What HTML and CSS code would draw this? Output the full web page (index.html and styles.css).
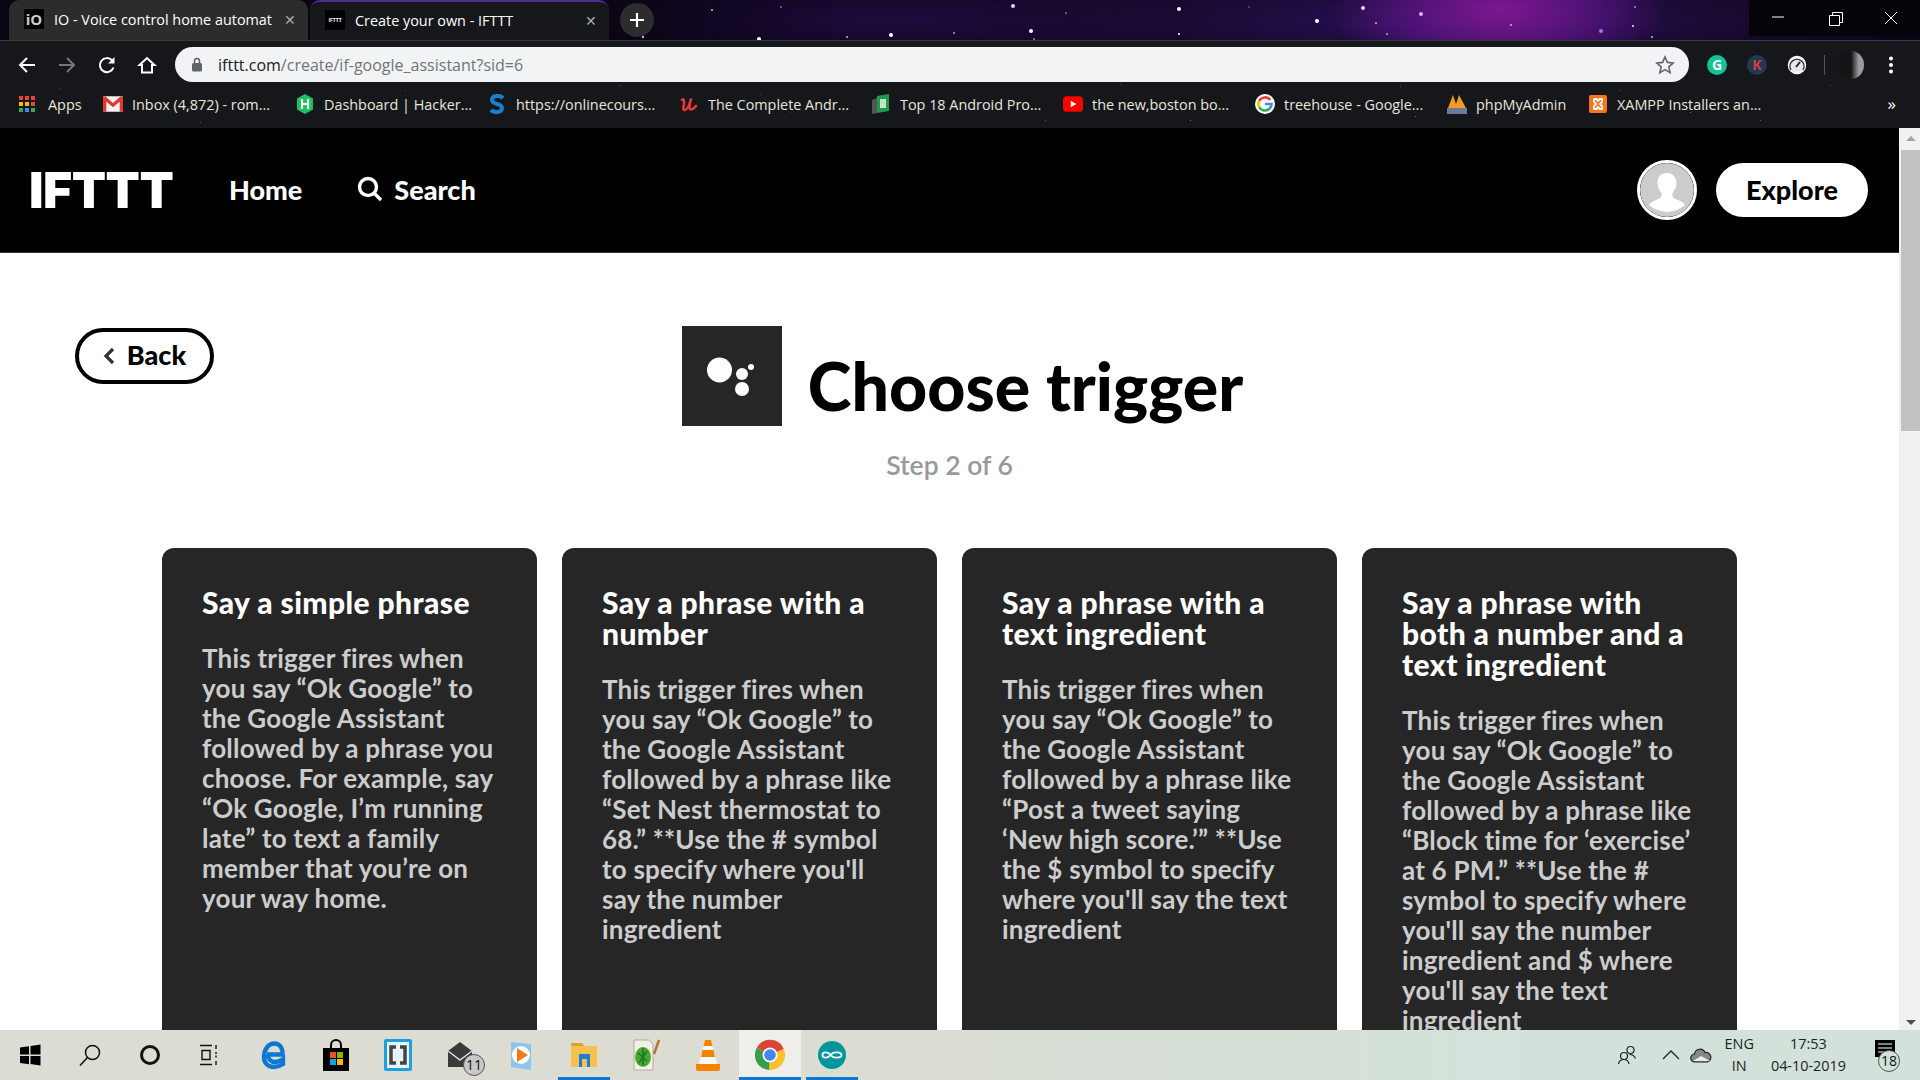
FILE: index.html
```html
<!DOCTYPE html>
<html lang="en">
<head>
    <meta charset="UTF-8">
    <title>Create your own - IFTTT</title>
    <link rel="stylesheet" href="styles.css">
</head>
<body>
    <div class="chrome">
        <div class="tabstrip">
            <div class="stars"></div>
            <div class="tab tab-idle">
                <span class="fav fav-io">iO</span>
                <span class="tab-title">IO - Voice control home automat</span>
                <span class="tab-x">✕</span>
            </div>
            <div class="tab tab-active">
                <span class="fav fav-ifttt">IFTTT</span>
                <span class="tab-title">Create your own - IFTTT</span>
                <span class="tab-x">✕</span>
            </div>
            <div class="newtab">
                <svg width="16" height="16" viewBox="0 0 16 16"><path d="M8 1v14M1 8h14" stroke="#fff" stroke-width="2.2"/></svg>
            </div>
            <div class="winctl">
                <svg width="46" height="36" viewBox="0 0 46 36"><path d="M17 17h12" stroke="#fff" stroke-width="1"/></svg>
                <svg width="46" height="36" viewBox="0 0 46 36"><path d="M17.500 15.500h10v10h-10zM20.500 15.500v-3h10v10h-3" fill="none" stroke="#fff" stroke-width="1"/></svg>
                <svg width="46" height="36" viewBox="0 0 46 36"><path d="M17 12l12 12M29 12l-12 12" stroke="#fff" stroke-width="1"/></svg>
            </div>
        </div>
        <div class="toolbar">
            <div class="nav-icons">
                <svg width="20" height="20" viewBox="0 0 20 20"><path d="M18 10H3M10 3l-7 7 7 7" fill="none" stroke="#fff" stroke-width="2"/></svg>
                <svg width="20" height="20" viewBox="0 0 20 20"><path d="M2 10h15M10 3l7 7-7 7" fill="none" stroke="#75777a" stroke-width="2"/></svg>
                <svg width="20" height="20" viewBox="0 0 20 20"><path d="M16.500 12.500A7 7 0 1 1 15 5.300" fill="none" stroke="#fff" stroke-width="2"/><path d="M17.500 2v6.500H11z" fill="#fff"/></svg>
                <svg width="20" height="20" viewBox="0 0 20 20"><path d="M2.500 10L10 3l7.500 7H15v7.500H5V10z" fill="none" stroke="#fff" stroke-width="2"/></svg>
            </div>
            <div class="urlbar">
                <svg width="12" height="15" viewBox="0 0 12 15"><rect x="1" y="6" width="10" height="8.500" rx="1.500" fill="#5f6368"/><path d="M3.500 6V4a2.500 2.500 0 0 1 5 0v2" fill="none" stroke="#5f6368" stroke-width="1.500"/></svg>
                <span class="url"><b>ifttt.com</b>/create/if-google_assistant?sid=6</span>
                <svg class="star" width="20" height="20" viewBox="0 0 20 20"><path d="M10 2l2.400 5.400 5.800.6-4.400 3.900 1.300 5.700L10 14.600l-5.100 3 1.300-5.700L1.800 8l5.800-.6z" fill="none" stroke="#5f6368" stroke-width="1.600"/></svg>
            </div>
            <div class="ext-icons">
                <span class="ext ext-g">G</span>
                <span class="ext ext-k">K</span>
                <svg width="20" height="20" viewBox="0 0 20 20"><circle cx="10" cy="10" r="8.500" fill="#e8e8e8" stroke="#fff" stroke-width="1.500"/><path d="M4 15a7 7 0 1 1 12 0" fill="none" stroke="#222" stroke-width="1.300"/><path d="M9 12l4-5" stroke="#222" stroke-width="2"/></svg>
                <span class="ext-sep"></span>
                <span class="profile"></span>
                <svg class="dots" width="6" height="20" viewBox="0 0 6 20"><circle cx="3" cy="3.500" r="2" fill="#fff"/><circle cx="3" cy="10" r="2" fill="#fff"/><circle cx="3" cy="16.500" r="2" fill="#fff"/></svg>
            </div>
        </div>
        <div class="bookmarks">
            <div class="stars stars-dim"></div>
            <a class="bm bm-apps">
                <svg viewBox="0 0 16 16"><g fill="#ea4335"><rect width="4" height="4"/><rect x="6" width="4" height="4"/><rect x="12" width="4" height="4"/></g><g fill="#fbbc05"><rect y="6" width="4" height="4"/><rect x="6" y="6" width="4" height="4"/><rect x="12" y="6" width="4" height="4" fill="#ea4335"/></g><g fill="#34a853"><rect y="12" width="4" height="4"/><rect x="6" y="12" width="4" height="4" fill="#4285f4"/><rect x="12" y="12" width="4" height="4"/></g></svg>
                Apps
            </a>
            <a class="bm">
                <svg viewBox="0 0 18 16"><rect y="1" width="18" height="14" rx="1" fill="#f4f4f4"/><path d="M0 2v13h3V6l6 5 6-5v9h3V2l-2-1-7 6-7-6z" fill="#e0392e"/></svg>
                Inbox (4,872) - rom...
            </a>
            <a class="bm">
                <svg viewBox="0 0 18 20"><path d="M9 0l8 4.500v11L9 20l-8-4.500v-11z" fill="#1bc15a"/><path d="M6 5v10M12 5v10M6 10h6" stroke="#fff" stroke-width="2.200"/></svg>
                Dashboard | Hacker...
            </a>
            <a class="bm">
                <svg viewBox="0 0 18 20"><path d="M15 4C12 1 4 1 4 6c0 5 10 3 10 8 0 5-8 5-11 2" fill="none" stroke="#1a7fd1" stroke-width="4"/></svg>
                https://onlinecours...
            </a>
            <a class="bm">
                <svg viewBox="0 0 18 18"><path d="M2 6c3-4 3 2 2 6s3 3 5-2l2-6c-2 6-2 10 0 10s3-2 5-4" fill="none" stroke="#e8383d" stroke-width="2.200"/></svg>
                The Complete Andr...
            </a>
            <a class="bm">
                <svg viewBox="0 0 18 20"><path d="M0 6l5-2v15l-5 1z" fill="#555"/><path d="M5 2l12-2v17L5 19z" fill="#1f9a4e"/><path d="M8 5h6v9H8z" fill="#bfe6c8"/></svg>
                Top 18 Android Pro...
            </a>
            <a class="bm">
                <svg viewBox="0 0 18 14"><rect width="18" height="14" rx="3.500" fill="#f00"/><path d="M7 4l5 3-5 3z" fill="#fff"/></svg>
                the new,boston bo...
            </a>
            <a class="bm">
                <svg viewBox="0 0 20 20"><circle cx="10" cy="10" r="10" fill="#fff"/><path d="M15.200 6A6.500 6.500 0 0 0 4.200 7" fill="none" stroke="#ea4335" stroke-width="2.600"/><path d="M4.200 7a6.500 6.500 0 0 0 0 6" fill="none" stroke="#fbbc05" stroke-width="2.600"/><path d="M4.200 13a6.500 6.500 0 0 0 10.500 1.500" fill="none" stroke="#34a853" stroke-width="2.600"/><path d="M14.700 14.500c1.300-1.300 1.800-2.700 1.800-4.500H10" fill="none" stroke="#4285f4" stroke-width="2.600"/></svg>
                treehouse - Google...
            </a>
            <a class="bm bm-pma">
                <svg viewBox="0 0 20 20"><path d="M1 14L6 1l3 9 3-9 7 13z" fill="#f29b21"/><rect y="14" width="20" height="6" fill="#6c7a99"/></svg>
                phpMyAdmin
            </a>
            <a class="bm">
                <svg viewBox="0 0 18 20"><rect y="1" width="18" height="18" rx="2" fill="#f5761f"/><path d="M5 5h2.500L9 7l1.500-2H13v3l-2 2 2 2v3h-2.500L9 13l-1.500 2H5v-3l2-2-2-2z" fill="none" stroke="#fff" stroke-width="1.800"/></svg>
                XAMPP Installers an...
            </a>
            <span class="bm-more">»</span>
        </div>
    </div>

    <div class="viewport">
        <div class="page">
            <header class="topnav">
                <span class="logo">IFTTT</span>
                <a class="navlink">Home</a>
                <a class="navlink nav-search">
                    <svg width="26" height="26" viewBox="0 0 26 26"><circle cx="11" cy="11" r="8.500" fill="none" stroke="#fff" stroke-width="3.400"/><path d="M17 17l7 7" stroke="#fff" stroke-width="3.400"/></svg>
                    Search
                </a>
                <span class="avatar">
                    <svg width="54" height="54" viewBox="0 0 54 54"><circle cx="27" cy="27" r="27" fill="#ccc"/><path d="M27 10c-7 0-10 5-9.500 11 .3 4 2 7 4 9 .5 3-.5 5-3 6-4 1.500-8 3-9.500 6a27 27 0 0 0 36 0c-1.500-3-5.500-4.500-9.500-6-2.500-1-3.500-3-3-6 2-2 3.700-5 4-9C36.500 15 34 10 27 10z" fill="#fff"/></svg>
                </span>
                <a class="explore">Explore</a>
            </header>

            <main class="content">
                <div class="title-row">
                    <a class="back">
                        <svg width="12" height="18" viewBox="0 0 12 18"><path d="M10 2L3 9l7 7" fill="none" stroke="#333" stroke-width="3.200"/></svg>
                        <span class="back-label">Back</span>
                    </a>
                    <div class="title-group">
                        <div class="service-icon">
                            <svg width="100" height="100" viewBox="0 0 100 100"><circle cx="37.500" cy="44" r="12.500" fill="#fff"/><circle cx="60" cy="48" r="6" fill="#fff"/><circle cx="69" cy="41" r="3" fill="#fff"/><circle cx="60" cy="63" r="7" fill="#fff"/></svg>
                        </div>
                        <h1>Choose trigger</h1>
                    </div>
                </div>
                <p class="step">Step 2 of 6</p>

                <section class="cards">
                    <article class="card">
                        <h2>Say a simple phrase</h2>
                        <p>This trigger fires when<br>you say “Ok Google” to<br>the Google Assistant<br>followed by a phrase you<br>choose. For example, say<br>“Ok Google, I’m running<br>late” to text a family<br>member that you’re on<br>your way home.</p>
                    </article>
                    <article class="card">
                        <h2>Say a phrase with a<br>number</h2>
                        <p>This trigger fires when<br>you say “Ok Google” to<br>the Google Assistant<br>followed by a phrase like<br>“Set Nest thermostat to<br>68.” **Use the # symbol<br>to specify where you'll<br>say the number<br>ingredient</p>
                    </article>
                    <article class="card">
                        <h2>Say a phrase with a<br>text ingredient</h2>
                        <p>This trigger fires when<br>you say “Ok Google” to<br>the Google Assistant<br>followed by a phrase like<br>“Post a tweet saying<br>‘New high score.’” **Use<br>the $ symbol to specify<br>where you'll say the text<br>ingredient</p>
                    </article>
                    <article class="card">
                        <h2>Say a phrase with<br>both a number and a<br>text ingredient</h2>
                        <p>This trigger fires when<br>you say “Ok Google” to<br>the Google Assistant<br>followed by a phrase like<br>“Block time for ‘exercise’<br>at 6 PM.” **Use the #<br>symbol to specify where<br>you'll say the number<br>ingredient and $ where<br>you'll say the text<br>ingredient</p>
                    </article>
                </section>
            </main>
        </div>
        <div class="scrollbar">
            <span class="arrow-up"></span>
            <span class="thumb"></span>
            <span class="arrow-down"></span>
        </div>
    </div>

    <footer class="taskbar">
        <div class="task-icons">
            <span class="ti ti-sys"><svg width="24" height="24" viewBox="0 0 24 24"><path d="M2 4.500l9-1.300V11.500H2zM12.500 3l10-1.500v10h-10zM2 13h9v8.300l-9-1.300zM12.500 13h10v9.500l-10-1.500z" fill="#000"/></svg></span>
            <span class="ti ti-sys"><svg width="24" height="24" viewBox="0 0 24 24"><circle cx="14.500" cy="9.500" r="7" fill="none" stroke="#111" stroke-width="1.500"/><path d="M9.500 14.500L2 22.500" stroke="#111" stroke-width="1.500"/></svg></span>
            <span class="ti ti-sys"><svg width="24" height="24" viewBox="0 0 24 24"><circle cx="12" cy="12" r="8.500" fill="none" stroke="#111" stroke-width="3"/></svg></span>
            <span class="ti ti-sys"><svg width="24" height="24" viewBox="0 0 24 24"><path d="M2 2.500h12M2 21.500h12M4 7.500h8v9H4zM18 2v4M18 18v4" fill="none" stroke="#111" stroke-width="1.400"/><path d="M18 9v6" stroke="#111" stroke-width="1.400" stroke-dasharray="2 1.500"/></svg></span>
            <span class="ti"><svg width="26" height="30" viewBox="0 0 26 30"><path d="M6 14.500h15.500C22 8 18.500 3.500 13.500 3.500 7 3.500 3 10 3 17c0 6 4 10 10 10 3.500 0 6-1 9-3v-5c-3 2-5 3-8 3-4 0-7-3-7-7.500" fill="none" stroke="#0c78d6" stroke-width="4.400"/></svg></span>
            <span class="ti"><svg width="28" height="32" viewBox="0 0 28 32"><path d="M9 10V6a5 5 0 0 1 10 0v4" fill="none" stroke="#000" stroke-width="2"/><rect x="1" y="9" width="26" height="23" fill="#000"/><rect x="8" y="13" width="6" height="6" fill="#f25022"/><rect x="15" y="13" width="6" height="6" fill="#7fba00"/><rect x="8" y="20" width="6" height="6" fill="#00a4ef"/><rect x="15" y="20" width="6" height="6" fill="#ffb900"/></svg></span>
            <span class="ti"><svg width="30" height="34" viewBox="0 0 30 34"><rect x="1" y="1" width="28" height="32" rx="2" fill="#1c9ee0"/><rect x="4" y="4" width="22" height="26" fill="#e8f4fb"/><path d="M13 9H8v16h5M17 9h5v16h-5" fill="none" stroke="#444" stroke-width="3.500"/></svg></span>
            <span class="ti ti-mail"><svg width="26" height="28" viewBox="0 0 26 28"><path d="M13 1l12 9v16H1V10z" fill="#3a3a3a"/><path d="M1 10l12 9 12-9" fill="none" stroke="#ddd" stroke-width="1.500"/></svg><span class="badge">11</span></span>
            <span class="ti"><svg width="24" height="30" viewBox="0 0 24 30"><path d="M1 2l20 2v26L1 27z" fill="#8cc6ea"/><circle cx="11" cy="15" r="9" fill="#fff"/><path d="M7 8l11 7-11 7z" fill="#f07a1a"/></svg></span>
            <span class="ti ti-open"><svg width="28" height="28" viewBox="0 0 28 28"><path d="M1 2h11l3 3h12v21H1z" fill="#f3c14c"/><path d="M1 2h11l2 3H1z" fill="#dea32c"/><rect x="9" y="13" width="11" height="13" fill="#1a7fd1"/><rect x="12" y="18" width="5" height="8" fill="#f3c14c"/></svg></span>
            <span class="ti"><svg width="28" height="32" viewBox="0 0 28 32"><path d="M2 1h15l4 4v26H2z" fill="#f1f1ea" stroke="#aaa"/><ellipse cx="11" cy="18" rx="8" ry="10" fill="#4da628"/><path d="M6 14l9 8M7 24l8-12M11 9v17" stroke="#173" stroke-width="1.500"/><path d="M27 1l-5 14" stroke="#b07a2a" stroke-width="2.500"/></svg></span>
            <span class="ti"><svg width="26" height="32" viewBox="0 0 26 32"><path d="M10 1h6l6 24H4z" fill="#f7f7f7"/><path d="M10 1h6l1.500 6h-9zM7.500 11h11l1.500 7H6z" fill="#f58200"/><path d="M1 25h24v5a2 2 0 0 1-2 2H3a2 2 0 0 1-2-2z" fill="#f58200"/></svg></span>
            <span class="ti ti-open ti-chrome"><svg width="32" height="32" viewBox="0 0 32 32"><path d="M16 16L2.900 8.500A15 15 0 0 1 29.800 10z" fill="#db4437"/><path d="M16 16l13.800-6A15 15 0 0 1 15 31z" fill="#fbc02d"/><path d="M16 16l-1 15A15 15 0 0 1 2.900 8.500z" fill="#3b9c4a"/><circle cx="16" cy="16" r="7.500" fill="#fff"/><circle cx="16" cy="16" r="5.800" fill="#4285f4"/></svg></span>
            <span class="ti ti-open"><svg width="28" height="28" viewBox="0 0 28 28"><circle cx="14" cy="14" r="14" fill="#00979c"/><path d="M12.500 14c-3-4-8-3-8 0s5 4 8 0c3-4 11-3 11 0s-8 4-11 0z" fill="none" stroke="#fff" stroke-width="1.800"/></svg></span>
        </div>
        <div class="tray">
            <svg width="20" height="20" viewBox="0 0 20 20"><circle cx="7" cy="11" r="3.500" fill="none" stroke="#222" stroke-width="1.200"/><circle cx="13.500" cy="5" r="3.500" fill="none" stroke="#222" stroke-width="1.200"/><path d="M1.500 19c.5-3 2.500-4.500 5.500-4.500s4.500 1.500 5 4.500M12.500 9.500c3 0 5 1.500 6 4" fill="none" stroke="#222" stroke-width="1.200"/></svg>
            <svg class="tray-up" width="18" height="10" viewBox="0 0 18 10"><path d="M1 9l8-8 8 8" fill="none" stroke="#222" stroke-width="1.300"/></svg>
            <svg class="tray-cloud" width="22" height="15" viewBox="0 0 22 15"><path d="M5 14a4 4 0 0 1-.5-8A5.500 5.500 0 0 1 15 4.500 4.800 4.800 0 0 1 17 14z" fill="#888" stroke="#222" stroke-width="1.200"/><path d="M3 13l8-5 9 5z" fill="#eee"/></svg>
            <div class="lang">ENG<br>IN</div>
            <div class="clock">17:53<br>04-10-2019</div>
            <div class="notif">
                <svg width="20" height="18" viewBox="0 0 20 18"><rect width="20" height="17" fill="#000"/><path d="M3 4h14M3 8h14M3 12h10" stroke="#fff" stroke-width="1.200"/></svg>
                <span class="badge">18</span>
            </div>
        </div>
    </footer>
</body>
</html>
```

FILE: styles.css
```css
* {
    box-sizing: border-box;
}

html, body {
    height: 100%;
}

body {
    margin: 0;
    width: 1920px;
    height: 1080px;
    display: flex;
    flex-direction: column;
    overflow: hidden;
    font-family: "Open Sans", sans-serif;
}

/* browser chrome */
.chrome {
    flex: none;
    height: 128px;
    background: #16171a;
}

.tabstrip {
    position: relative;
    height: 41px;
    display: flex;
    align-items: flex-end;
    padding-left: 9px;
    background:
        radial-gradient(ellipse 170px 70px at 1500px 10px, #7d1790 0%, rgba(90, 20, 130, .75) 55%, transparent 100%),
        radial-gradient(ellipse 500px 60px at 1450px 20px, #2a1058 0%, transparent 100%),
        radial-gradient(ellipse 300px 50px at 900px 20px, #1e0a3e 0%, transparent 100%),
        #0a0514;
    border-bottom: 1px solid #3a3540;
    overflow: hidden;
}

.stars {
    position: absolute;
    left: 0;
    top: 0;
    width: 2px;
    height: 2px;
    border-radius: 50%;
    background: transparent;
    box-shadow:
        711px 9px 0 0 #c9b8ff, 780px 6px 0 0 #7a6ea0, 758px 38px 0 1px #fff, 890px 34px 0 1px #fff,
        846px 36px 0 0 #d6a0ff, 1012px 5px 0 1px #e0d0ff, 953px 32px 0 0 #d080ff, 1033px 38px 0 0 #a070ff,
        1030px 30px 0 1px #fff, 1178px 33px 0 0 #fff, 1065px 12px 0 0 #7a6ea0, 1248px 6px 0 0 #5a4e90,
        1178px 8px 0 1px #fff, 1316px 20px 0 1px #fff, 1362px 7px 0 1px #e8d0ff, 1375px 22px 0 0 #ffa0d0,
        1386px 33px 0 0 #a0a0ff, 1420px 13px 0 1px #e0b0ff, 1510px 24px 0 0 #ffa0d0, 1632px 25px 0 0 #ffe0ff,
        1651px 36px 0 0 #a0c0ff, 1600px 30px 0 1px #a070ff, 1634px 6px 0 0 #8090ff, 642px 36px 0 0 #fff;
}

.stars-dim {
    width: 1px;
    height: 1px;
    box-shadow:
        60px 6px 0 #555, 200px 40px 0 #666, 405px 8px 0 #555, 620px 3px 0 #777, 760px 12px 0 #555,
        790px 30px 0 #444, 1045px 38px 0 #777, 1120px 2px 0 #555, 1190px 38px 0 #999, 1400px 4px 0 #666,
        1415px 34px 0 #6a88cc, 1620px 8px 0 #777, 1690px 30px 0 #888, 1760px 38px 0 #777, 1830px 3px 0 #666;
}

.tab {
    position: relative;
    width: 299px;
    height: 40px;
    display: flex;
    align-items: center;
    gap: 10px;
    padding: 0 12px 2px 15px;
    border-radius: 10px 10px 0 0;
    color: #fff;
    font-size: 14.4px;
}

.tab-idle {
    background: #2c2c2c;
}

.tab-active {
    margin-left: 2px;
    background: #16171a;
    border-top: 2px solid #4f2f8a;
}

.fav {
    flex: none;
    width: 20px;
    height: 20px;
    background: #000;
    color: #ccc;
    text-align: center;
    overflow: hidden;
}

.fav-io {
    font-size: 15px;
    font-weight: 700;
    line-height: 20px;
}

.fav-ifttt {
    font-size: 5px;
    font-weight: 700;
    line-height: 20px;
    color: #fff;
}

.tab-title {
    flex: 1;
    white-space: nowrap;
}

.tab-x {
    color: #aaa;
    font-size: 14px;
}

.newtab {
    position: relative;
    width: 34px;
    height: 34px;
    margin: 0 0 3px 11px;
    border-radius: 50%;
    background: #2c2c2c;
    display: flex;
    align-items: center;
    justify-content: center;
}

.winctl {
    position: absolute;
    right: 0;
    top: 0;
    width: 171px;
    height: 36px;
    padding: 0 6px;
    background: #05040a;
    display: flex;
    justify-content: space-between;
}

.toolbar {
    height: 41px;
    display: flex;
    align-items: center;
    padding-top: 6px;
}

.nav-icons {
    width: 175px;
    display: flex;
    gap: 20px;
    padding-left: 17px;
}

.urlbar {
    width: 1514px;
    height: 35px;
    border-radius: 18px;
    background: #f1f3f4;
    display: flex;
    align-items: center;
    padding: 0 14px 0 16px;
}

.url {
    flex: 1;
    margin-left: 15px;
    font-size: 16px;
    color: #70757a;
}

.url b {
    font-weight: 400;
    color: #202124;
}

.ext-icons {
    flex: 1;
    display: flex;
    align-items: center;
    gap: 20px;
    padding-left: 18px;
}

.ext {
    width: 20px;
    height: 20px;
    border-radius: 50%;
    text-align: center;
    font-size: 14px;
    font-weight: 700;
    line-height: 20px;
}

.ext-g {
    background: #15c39a;
    color: #fff;
}

.ext-k {
    background: #24384e;
    color: #d0403c;
}

.ext-sep {
    width: 1px;
    height: 20px;
    margin: 0 -7px 0 -3px;
    background: #555;
}

.profile {
    width: 26px;
    height: 28px;
    border-radius: 50%;
    background: linear-gradient(90deg, #141414 50%, #9a9aa2 80%);
}

.dots {
    margin-left: 4px;
}

.bookmarks {
    position: relative;
    height: 46px;
    display: flex;
    align-items: center;
    padding: 0 0 2px 19px;
    color: #e6e6dc;
    font-size: 14.4px;
}

.bm {
    position: relative;
    flex: none;
    width: 192px;
    display: flex;
    align-items: center;
    gap: 9px;
    white-space: nowrap;
}

.bm svg {
    flex: none;
    width: 20px;
    height: 20px;
}

.bm-apps {
    width: 84px;
    gap: 13px;
}

.bm-apps svg {
    width: 16px;
    height: 16px;
}

.bm-pma {
    width: 141px;
}

.bm-more {
    position: absolute;
    right: 24px;
    top: 10px;
    font-size: 17px;
    color: #fff;
}

/* page area */
.viewport {
    flex: 1;
    min-height: 0;
    display: flex;
}

.page {
    flex: 1;
    min-width: 0;
    overflow: hidden;
    background: #fff;
    color: #000;
    font-family: Lato, sans-serif;
}

.topnav {
    height: 125px;
    display: flex;
    align-items: center;
    padding: 0 31px 0 30px;
    background: #000;
    border-bottom: 1px solid #333;
    color: #fff;
}

.logo {
    width: 144px;
    margin-right: 56px;
    margin-left: -1px;
    font-family: Inter, sans-serif;
    font-size: 50px;
    font-weight: 900;
    letter-spacing: -.5px;
    line-height: 1;
}

.navlink {
    padding-bottom: 2px;
    font-size: 27px;
    font-weight: 900;
    margin-right: 55px;
}

.nav-search {
    display: flex;
    align-items: center;
    gap: 11px;
}

.avatar {
    margin-left: auto;
    width: 60px;
    height: 60px;
    border-radius: 50%;
    border: 3px solid #fff;
    overflow: hidden;
}

.explore {
    margin-left: 19px;
    width: 152px;
    height: 54px;
    border-radius: 27px;
    background: #fff;
    color: #000;
    font-size: 27px;
    font-weight: 900;
    line-height: 54px;
    text-align: center;
}

.content {
    padding-top: 73px;
}

.title-row {
    display: grid;
    grid-template-columns: 1fr auto 1fr;
    align-items: start;
}

.back {
    justify-self: start;
    margin: 2px 0 0 75px;
    width: 139px;
    height: 56px;
    border: 4px solid #000;
    border-radius: 28px;
    display: flex;
    align-items: center;
    justify-content: center;
    gap: 12px;
    font-size: 27px;
    font-weight: 900;
}

.back-label {
    padding-bottom: 4px;
}

.title-group {
    display: flex;
    align-items: center;
    gap: 26px;
    margin-left: 26px;
}

.service-icon {
    width: 100px;
    height: 100px;
    background: #262626;
}

h1 {
    margin: 0;
    padding-top: 20px;
    font-size: 66.2px;
    font-weight: 900;
    line-height: 1.2;
}

.step {
    margin: 24px 0 0;
    text-align: center;
    font-size: 26.5px;
    font-weight: 600;
    line-height: 30px;
    color: #999;
}

.cards {
    margin: 68px 0 0 162px;
    display: flex;
    gap: 25px;
}

.card {
    flex: none;
    width: 375px;
    min-height: 640px;
    padding: 39px 40px 40px;
    border-radius: 12px;
    background: #262626;
    color: #fff;
}

.card h2 {
    margin: 0;
    font-size: 30px;
    font-weight: 900;
    letter-spacing: .4px;
    line-height: 31px;
}

.card p {
    margin: 25px 0 0;
    font-size: 26px;
    font-weight: 700;
    letter-spacing: .2px;
    line-height: 30px;
    color: #ccc;
    white-space: nowrap;
}

.scrollbar {
    flex: none;
    width: 21px;
    padding-left: 2px;
    display: flex;
    flex-direction: column;
    align-items: center;
    background: #f1f1f1;
}

.thumb {
    width: 100%;
    height: 281px;
    margin-top: 9px;
    background: #c1c1c1;
}

.arrow-up,
.arrow-down {
    width: 0;
    height: 0;
    border-left: 5px solid transparent;
    border-right: 5px solid transparent;
}

.arrow-up {
    margin-top: 8px;
    border-bottom: 5px solid #a3a3a3;
}

.arrow-down {
    margin-top: auto;
    margin-bottom: 5px;
    border-top: 5px solid #505050;
}

/* windows taskbar */
.taskbar {
    flex: none;
    height: 50px;
    display: flex;
    align-items: stretch;
    justify-content: space-between;
    background: linear-gradient(90deg, #dcdcd2 0%, #dcdcd2 40%, #d2e2da 80%, #d2e2da 100%);
    color: #222;
}

.task-icons {
    display: flex;
}

.ti {
    position: relative;
    width: 62px;
    display: flex;
    align-items: center;
    justify-content: center;
}

.ti-sys {
    width: 60px;
}

.ti-sys:nth-child(4) {
    margin-right: 3px;
}

.ti-open::after {
    content: "";
    position: absolute;
    left: 5px;
    right: 5px;
    bottom: 0;
    height: 3px;
    background: #0a78d7;
}

.ti-chrome {
    background: #eeeeea;
}

.ti-chrome::after {
    left: 0;
    right: 0;
}

.badge {
    position: absolute;
    width: 22px;
    height: 22px;
    border: 1px solid #555;
    border-radius: 50%;
    background: #c8c8c8;
    color: #111;
    font-size: 14px;
    line-height: 20px;
    text-align: center;
}

.ti-mail .badge {
    left: 34px;
    top: 24px;
}

.tray {
    display: flex;
    align-items: center;
    padding-right: 19px;
    font-family: "Open Sans", sans-serif;
    font-size: 14.4px;
    line-height: 22px;
    text-align: center;
}

.tray-up {
    margin-left: 25px;
}

.tray-cloud {
    margin-left: 10px;
}

.lang {
    margin-left: 13px;
}

.clock {
    margin-left: 17px;
}

.notif {
    position: relative;
    width: 32px;
    height: 40px;
    margin-left: 23px;
    padding-top: 5px;
}

.notif .badge {
    left: 9px;
    top: 15px;
    background: #d2e2da;
}
```
